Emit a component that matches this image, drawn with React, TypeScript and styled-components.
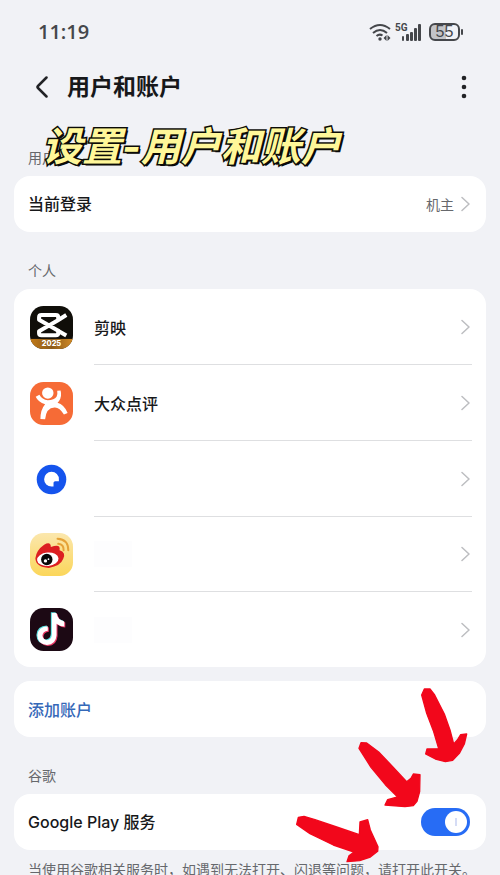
import React from "react";
import styled, { createGlobalStyle } from "styled-components";

const GlobalStyle = createGlobalStyle`
  * { box-sizing: border-box; }
  html { scrollbar-width: none; }
  body {
    margin: 0;
    background: #f1f2f6;
    color: #17181a;
    font-family: Inter, "Noto Sans CJK SC", sans-serif;
    font-size: 16px;
  }
  button, input { font: inherit; margin: 0; }
`;

const Page = styled.main`
  padding: 0 14px 16px;
  overflow: hidden;
`;

const StatusBar = styled.div`
  display: flex;
  align-items: center;
  justify-content: space-between;
  height: 64px;
  padding: 0 22px 0 24px;
  color: #45474b;
`;

const Clock = styled.time`
  font-family: "Open Sans", sans-serif;
  font-size: 20px;
  font-weight: 600;
  line-height: 24px;
`;

const StatusIcons = styled.div`
  display: flex;
  align-items: center;
  gap: 4px;
`;

const Battery = styled.span`
  position: relative;
  display: grid;
  place-items: center;
  width: 31px;
  height: 18px;
  margin: 0 4px 0 3px;
  border: 2px solid #45474b;
  border-radius: 6px;
  background: linear-gradient(90deg, #c3c4c7 55%, transparent 55%);
  font-family: "Liberation Sans", sans-serif;
  font-size: 16px;
  line-height: 14px;

  &::after {
    content: "";
    position: absolute;
    right: -5px;
    top: 4px;
    width: 2px;
    height: 6px;
    border-radius: 1px;
    background: #45474b;
  }
`;

const Header = styled.header`
  display: flex;
  align-items: center;
  height: 46px;
  padding: 0 12px 0 18px;
`;

const IconButton = styled.button`
  display: grid;
  place-items: center;
  width: 20px;
  height: 32px;
  padding: 0;
  border: 0;
  background: none;
  color: #222326;
  cursor: pointer;
`;

const Title = styled.h1`
  flex: 1;
  margin: 0 0 0 15px;
  font-size: 23px;
  font-weight: 600;
  line-height: 32px;
`;

const Section = styled.section`
  position: relative;
`;

const SectionLabel = styled.h2<{ $top: number }>`
  margin: 0;
  padding: ${(p) => p.$top}px 14px 8px;
  color: #66686c;
  font-size: 14px;
  font-weight: 400;
  line-height: 20px;
`;

const Caption = styled.div`
  position: absolute;
  left: 28px;
  top: 10px;
  color: #fff799;
  font-size: 40px;
  font-style: italic;
  font-weight: 700;
  line-height: 54px;
  white-space: nowrap;
  -webkit-text-stroke: 3px #0b0b08;
  paint-order: stroke fill;
  text-shadow: 1px 1px 0 #0b0b08, 2px 2px 0 #0b0b08;
`;

const Card = styled.div<{ $gap?: number }>`
  margin-top: ${(p) => p.$gap ?? 0}px;
  border-radius: 16px;
  background: #fff;
  overflow: hidden;
`;

const Row = styled.button`
  display: flex;
  align-items: center;
  width: 100%;
  height: 56px;
  padding: 0 16px 0 14px;
  border: 0;
  background: none;
  color: inherit;
  font-weight: 500;
  text-align: left;
  cursor: pointer;
`;

const RowText = styled.span`
  flex: 1;
  line-height: 24px;
`;

const RowValue = styled.span`
  margin-right: 7px;
  color: #66686c;
  font-size: 14px;
  font-weight: 400;
`;

const AddRow = styled(Row)`
  color: #3568b8;
`;

const SwitchRow = styled.label`
  display: flex;
  align-items: center;
  height: 56px;
  padding: 0 16px 0 14px;
  font-weight: 500;
  cursor: pointer;
`;

const Switch = styled.input`
  appearance: none;
  display: flex;
  align-items: center;
  width: 49px;
  height: 28px;
  padding: 0 3px;
  border-radius: 14px;
  background: #c9cbd0;
  cursor: pointer;

  &::before {
    content: "";
    width: 22px;
    height: 22px;
    border-radius: 11px;
    background: linear-gradient(#d5dcf5, #d5dcf5) center / 2px 8px no-repeat #fff;
  }
  &:checked {
    justify-content: flex-end;
    background: #276cf5;
  }
`;

const AccountList = styled.ul`
  margin: 0;
  padding: 0;
  list-style: none;
`;

const AccountButton = styled.button`
  display: flex;
  align-items: stretch;
  width: 100%;
  padding: 0 14px 0 16px;
  border: 0;
  background: none;
  color: inherit;
  font-weight: 500;
  text-align: left;
  cursor: pointer;
`;

const AppIcon = styled.svg`
  flex: none;
  align-self: center;
  width: 43px;
  height: 43px;
  margin-right: 21px;
`;

const AccountBody = styled.span`
  flex: 1;
  display: flex;
  align-items: center;
  height: 76px;
  padding-right: 2px;
  border-bottom: 1px solid #dedfe1;

  li:nth-child(4) &,
  li:last-child & {
    height: 75px;
  }
  li:last-child & {
    border-bottom: 0;
  }
`;

const HiddenName = styled.span`
  width: 38px;
  height: 26px;
  background: #fdfdfe;
`;

const Spacer = styled.span`
  flex: 1;
`;

const Footnote = styled.p`
  margin: 0;
  padding: 9px 0 0 14px;
  color: #66686c;
  font-size: 14px;
  line-height: 22px;
  white-space: nowrap;
`;

const Arrows = styled.svg`
  position: absolute;
  right: -14px;
  top: -11px;
  width: 220px;
  height: 205px;
  pointer-events: none;
`;

const Chevron = () => (
  <svg width="9" height="16" viewBox="0 0 9 16" fill="none" stroke="#bdbec1" strokeWidth="1.5" strokeLinecap="round" strokeLinejoin="round" aria-hidden="true">
    <path d="M1 1.5 8 8 1 14.5" />
  </svg>
);

const JianyingIcon = () => (
  <AppIcon viewBox="0 0 128 128" aria-hidden="true">
    <defs>
      <clipPath id="jy"><rect width="128" height="128" rx="40" /></clipPath>
      <linearGradient id="gold" x1="0" x2="1">
        <stop offset="0" stopColor="#c37a16" />
        <stop offset=".5" stopColor="#8c5b1b" />
        <stop offset="1" stopColor="#d28a24" />
      </linearGradient>
    </defs>
    <g clipPath="url(#jy)">
      <rect width="128" height="128" fill="#100e09" />
      <rect y="98" width="128" height="30" fill="url(#gold)" />
      <g fill="none" stroke="#fff" strokeWidth="12" strokeLinejoin="round">
        <path d="M108 27 82 43 27 75V81Q27 87 34 87H77Q84 87 84 80V74L27 41V34Q27 27 34 27H77Q84 27 84 34V42" />
        <path d="M82 73 108 88" />
      </g>
      <text x="64" y="120" textAnchor="middle" fill="#fff" fontFamily="Inter, sans-serif" fontWeight="800" fontSize="22">2025</text>
    </g>
  </AppIcon>
);

const DianpingIcon = () => (
  <AppIcon viewBox="0 0 128 128" aria-hidden="true">
    <rect width="128" height="128" rx="40" fill="#f66b36" />
    <circle cx="53" cy="33" r="17" fill="#fff" />
    <path fill="#fff" d="M17 44 28 38Q36 53 53 54 72 54 79 44 83 38 81 26L91 25Q96 43 86 57L82 62Q101 67 112 92L101 97Q88 75 73 76 48 77 45 111L31 110Q31 82 45 66 24 60 17 44Z" />
  </AppIcon>
);

const BrowserIcon = () => (
  <AppIcon viewBox="0 0 128 128" aria-hidden="true">
    <circle cx="64" cy="64" r="44" fill="#1554ed" />
    <path fill="#fff" d="M64 41A22 22 0 0 1 86 64V69H75Q70 69 70 74V85H64A22 22 0 0 1 64 41Z" />
  </AppIcon>
);

const WeiboIcon = () => (
  <AppIcon viewBox="0 0 128 128" aria-hidden="true">
    <defs>
      <linearGradient id="wb" x2="0" y2="1">
        <stop offset="0" stopColor="#fbe7ad" />
        <stop offset="1" stopColor="#fbd65a" />
      </linearGradient>
    </defs>
    <rect width="128" height="128" rx="40" fill="url(#wb)" />
    <path fill="#dc1f22" d="M16 75Q19 51 42 35 62 24 62 42 92 31 88 51 108 57 99 77 91 99 56 104 17 101 16 75Z" />
    <ellipse cx="53" cy="78" rx="32" ry="20" fill="#fff" transform="rotate(-5 53 78)" />
    <circle cx="50" cy="79" r="17" fill="#080808" />
    <circle cx="46" cy="83" r="5" fill="#fff" />
    <circle cx="55" cy="78" r="2.5" fill="#fff" />
    <path d="M84 32Q101 34 100 51M82 17Q114 19 114 51" fill="none" stroke="#e5a237" strokeWidth="6" strokeLinecap="round" />
  </AppIcon>
);

const NOTE = "M64 15H78Q81 36 101 40V55Q88 55 78 47V81Q76 109 49 110 22 108 21 82 23 55 52 54V68Q37 70 36 82 38 95 50 96 63 94 64 79Z";

const DouyinIcon = () => (
  <AppIcon viewBox="0 0 128 128" aria-hidden="true">
    <rect width="128" height="128" rx="40" fill="#1c0914" />
    <path d={NOTE} fill="#58dfe0" transform="translate(-2 -2)" />
    <path d={NOTE} fill="#e93a67" transform="translate(4 3)" />
    <path d={NOTE} fill="#fff" transform="translate(1 0)" />
  </AppIcon>
);

const accounts = [
  { id: "jianying", label: "剪映", name: "剪映", Icon: JianyingIcon },
  { id: "dianping", label: "大众点评", name: "大众点评", Icon: DianpingIcon },
  { id: "browser", label: "浏览器", Icon: BrowserIcon },
  { id: "weibo", label: "微博", Icon: WeiboIcon, masked: true },
  { id: "douyin", label: "抖音", Icon: DouyinIcon, masked: true },
];

export default function App() {
  return (
    <>
      <GlobalStyle />
      <Page>
        <StatusBar>
          <Clock>11:19</Clock>
          <StatusIcons>
            <svg width="22" height="18" viewBox="0 0 22 18" fill="none" stroke="#45474b" strokeWidth="2" aria-hidden="true">
              <path d="M1 6Q11-2 21 6M4 10Q11 4 18 10M7.5 13Q10.500 10.500 13.500 12.500" />
              <circle cx="11" cy="16" r="1.700" fill="#45474b" stroke="none" />
              <path fill="#45474b" stroke="none" d="M14.500 15 17.500 12V18ZM18.500 12 21.500 15 18.500 18Z" />
            </svg>
            <svg width="27" height="20" viewBox="0 0 27 20" fill="#45474b" aria-hidden="true">
              <text x="0" y="9" fontFamily="Roboto, sans-serif" fontSize="10" fontWeight="700">5G</text>
              <rect x="7" y="14" width="2" height="5" rx="1" />
              <rect x="11" y="12" width="3" height="7" rx="1" />
              <rect x="15" y="10" width="3" height="9" rx="1" />
              <rect x="19" y="6" width="3" height="13" rx="1" />
              <rect x="23" y="2" width="3" height="17" rx="1" />
            </svg>
            <Battery>55</Battery>
          </StatusIcons>
        </StatusBar>

        <Header>
          <IconButton aria-label="返回">
            <svg width="14" height="22" viewBox="0 0 14 22" fill="none" stroke="currentColor" strokeWidth="2.500" strokeLinecap="round" strokeLinejoin="round">
              <path d="M11.500 1.500 3 10Q2 11 3 12L11.500 20.500" />
            </svg>
          </IconButton>
          <Title>用户和账户</Title>
          <IconButton aria-label="更多">
            <svg width="6" height="24" viewBox="0 0 6 24" fill="currentColor">
              <circle cx="3" cy="3" r="2.300" />
              <circle cx="3" cy="12" r="2.300" />
              <circle cx="3" cy="21" r="2.300" />
            </svg>
          </IconButton>
        </Header>

        <Section>
          <SectionLabel $top={38}>用户</SectionLabel>
          <Card>
            <Row>
              <RowText>当前登录</RowText>
              <RowValue>机主</RowValue>
              <Chevron />
            </Row>
          </Card>
          <Caption>设置-用户和账户</Caption>
        </Section>

        <Section>
          <SectionLabel $top={29}>个人</SectionLabel>
          <Card>
            <AccountList>
              {accounts.map(({ id, label, name, Icon, masked }) => (
                <li key={id}>
                  <AccountButton aria-label={label}>
                    <Icon />
                    <AccountBody>
                      {name}
                      {masked && <HiddenName />}
                      <Spacer />
                      <Chevron />
                    </AccountBody>
                  </AccountButton>
                </li>
              ))}
            </AccountList>
          </Card>
        </Section>

        <Section>
          <Card $gap={14}>
            <AddRow>添加账户</AddRow>
          </Card>
          <SectionLabel $top={29}>谷歌</SectionLabel>
          <Card>
            <SwitchRow>
              <RowText>Google Play 服务</RowText>
              <Switch type="checkbox" defaultChecked />
            </SwitchRow>
          </Card>
          <Footnote>当使用谷歌相关服务时，如遇到无法打开、闪退等问题，请打开此开关。</Footnote>
          <Arrows viewBox="-30 -30 660 615" fill="#f2071b" stroke="#f2071b" strokeWidth="4" strokeLinejoin="round" aria-hidden="true">
            <path d="M395 45 403 27H420L434 45 463 102 480 150 491 192 502 180 512 164 530 162 523 192 508 220 488 241 466 245 436 237 407 222 411 207 446 206 430 152 410 100Z" />
            <path d="M207 205 213 188 230 189 266 216 308 260 350 305 363 295 370 282 390 284 389 335 381 364 370 377 345 380 285 375 293 359 323 351 286 314 243 262Z" />
            <path d="M20 433 25 412 42 409 75 419 140 441 208 464 210 426 233 419 241 450 264 500 263 514 241 531 209 542 171 545 177 527 192 516 130 495 60 461Z" />
          </Arrows>
        </Section>
      </Page>
    </>
  );
}
